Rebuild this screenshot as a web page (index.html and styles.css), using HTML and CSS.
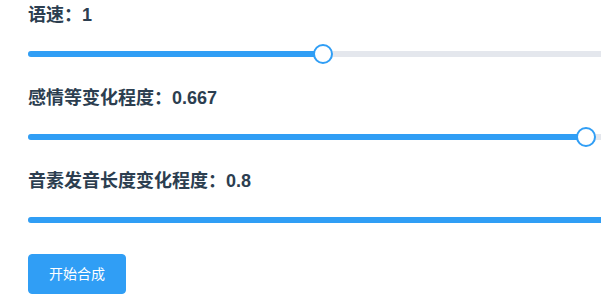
FILE: index.html
```html
<!DOCTYPE html>
<html lang="zh">
<head>
<meta charset="utf-8">
<title>语音合成</title>
<link rel="stylesheet" href="styles.css">
</head>
<body>
<div class="panel">
  <div class="row">
    <div class="label">语速：1</div>
    <div class="slider">
      <div class="fill" style="width:35.24%"></div>
      <div class="thumb" style="left:35.24%"></div>
    </div>
  </div>
  <div class="row">
    <div class="label">感情等变化程度：0.667</div>
    <div class="slider">
      <div class="fill" style="width:66.67%"></div>
      <div class="thumb" style="left:66.67%"></div>
    </div>
  </div>
  <div class="row">
    <div class="label">音素发音长度变化程度：0.8</div>
    <div class="slider">
      <div class="fill" style="width:80%"></div>
      <div class="thumb" style="left:80%"></div>
    </div>
  </div>
  <button class="btn" type="button">开始合成</button>
</div>
</body>
</html>
```
FILE: styles.css
```css
html, body {
  margin: 0;
  padding: 0;
  overflow: hidden;
  background: #ffffff;
}
body {
  font-family: "Liberation Sans", "Noto Sans CJK SC", sans-serif;
  color: #2c3e50;
}
.panel {
  padding: 3px 0 9px 28px;
  overflow: hidden;
}
.row {
  margin-bottom: 29px;
}
.row:last-of-type {
  margin-bottom: 31px;
}
.label {
  font-size: 18px;
  font-weight: bold;
  line-height: 24px;
  white-space: nowrap;
}
.slider {
  position: relative;
  margin-top: 24px;
  height: 6px;
  width: 837px;
  border-radius: 3px;
  background: #e4e7ed;
}
.fill {
  height: 6px;
  border-radius: 3px;
  background: #309ef5;
}
.thumb {
  position: absolute;
  top: -7px;
  width: 20px;
  height: 20px;
  margin-left: -10px;
  box-sizing: border-box;
  border: 2px solid #309ef5;
  border-radius: 50%;
  background: #ffffff;
}
.btn {
  display: block;
  box-sizing: border-box;
  height: 40px;
  width: 98px;
  padding: 0;
  border: 1px solid #309ef5;
  border-radius: 4px;
  background: #309ef5;
  color: #ffffff;
  font-family: "Liberation Sans", "Noto Sans CJK SC", sans-serif;
  font-size: 14px;
  line-height: 38px;
  text-align: center;
}
```
